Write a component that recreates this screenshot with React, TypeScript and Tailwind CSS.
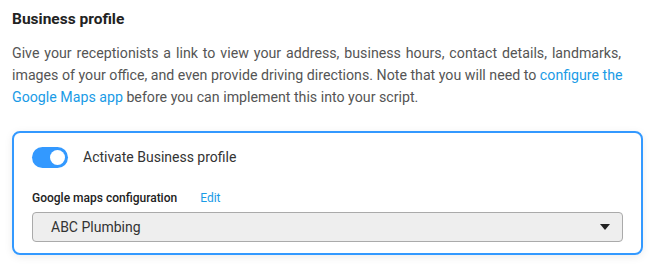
import { useState } from "react";

function Toggle() {
  const [on, setOn] = useState(true);
  return (
    <button
      onClick={() => setOn(!on)}
      className={`relative h-[21px] w-[36px] rounded-full ${on ? "bg-[#3399ff]" : "bg-gray-300"}`}
    >
      <span
        className={`absolute top-[3px] h-[15px] w-[15px] rounded-full bg-white ${on ? "left-[18px]" : "left-[3px]"}`}
      />
    </button>
  );
}

export default function App() {
  return (
    <div className="w-[661px] h-[277px] bg-white px-3 pt-[9px] font-['Roboto',sans-serif]">
      <h2 className="text-[15.5px] font-bold leading-5 text-[#222]">Business profile</h2>
      <p className="mt-[13px] w-[630px] text-[14.2px] leading-[22px] text-[#555]">
        <span className="[word-spacing:1.4px]">
          Give your receptionists a link to view your address, business hours, contact details, landmarks,
        </span>
        <br />
        images of your office, and even provide driving directions. Note that you will need to{" "}
        <a className="text-[#1a9be6]" href="#">
          configure the
          <br />
          Google Maps app
        </a>{" "}
        before you can implement this into your script.
      </p>
      <div className="mt-[23px] w-[631px] rounded-lg border-2 border-[#3399ff] px-[18px] pt-[14px] pb-[11px] shadow-[0_2px_8px_rgba(0,0,0,0.08)]">
        <div className="flex items-center gap-[15px]">
          <Toggle />
          <span className="text-[14px] text-[#333]">Activate Business profile</span>
        </div>
        <div className="mt-[21px] flex items-center gap-[23px] text-[12px]">
          <span className="font-medium text-[#222]">Google maps configuration</span>
          <a className="text-[#1a9be6]" href="#">
            Edit
          </a>
        </div>
        <div className="mt-[5px] flex h-[30px] items-center justify-between rounded border border-[#aaa] bg-[#eee] pl-[18px] pr-[12px]">
          <span className="text-[14px] text-[#333]">ABC Plumbing</span>
          <svg width="10" height="6" viewBox="0 0 10 6">
            <path d="M0 0h10L5 6z" fill="#222" />
          </svg>
        </div>
      </div>
    </div>
  );
}
